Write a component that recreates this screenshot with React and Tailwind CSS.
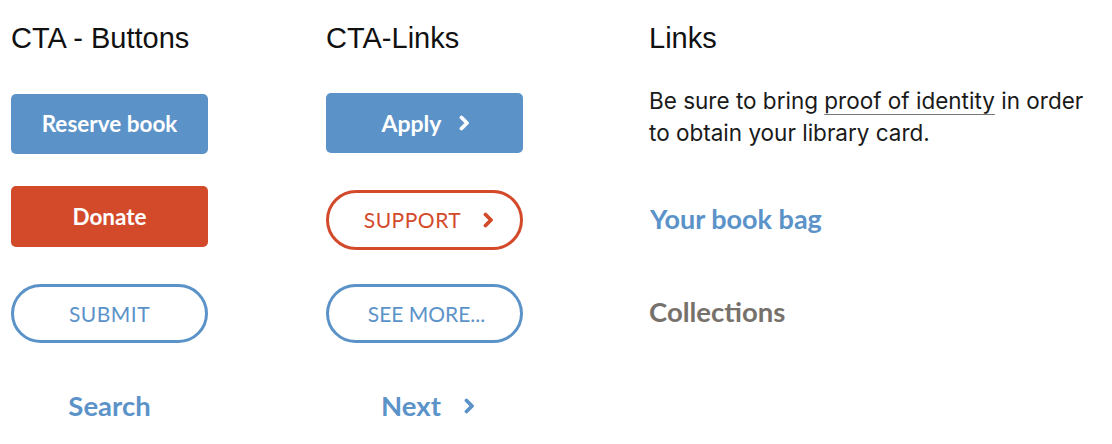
import React from 'react';

const head = "text-[29px] leading-[40px] text-[#111] font-['Liberation_Sans',Arial,sans-serif]";
const btnFont = "font-['Lato','Open_Sans',sans-serif]";

function Chevron({ className = '' }) {
  return (
    <svg className={className} width="13" height="16" viewBox="0 0 13 16" fill="none" stroke="currentColor" strokeWidth="3.8" strokeLinecap="round" strokeLinejoin="round">
      <path d="M3.5 2.5l5.5 5.5-5.5 5.5" />
    </svg>
  );
}

export default function App() {
  return (
    <div className="w-[1112px] h-[444px] bg-white overflow-hidden">
      <div className="grid grid-cols-[315px_323px_1fr] pl-[11px] pt-[18px]">
        {/* CTA - Buttons */}
        <div className="flex flex-col">
          <h2 className={head}>CTA - Buttons</h2>
          <button className={`${btnFont} mt-[36px] w-[197px] h-[60px] rounded-[5px] bg-[#5b93c9] text-white text-[22.5px] font-bold`}>
            Reserve book
          </button>
          <button className={`${btnFont} mt-[32px] w-[197px] h-[61px] rounded-[5px] bg-[#d34a2b] text-white text-[22.5px] font-bold`}>
            Donate
          </button>
          <button className={`${btnFont} mt-[37px] w-[197px] h-[59px] rounded-full border-[3px] border-[#5b93c9] text-[#5b93c9] text-[21px] tracking-[0.5px]`}>
            SUBMIT
          </button>
          <a className={`${btnFont} mt-[43px] w-[197px] h-[40px] flex items-center justify-center text-[#5b93c9] text-[27.5px] font-bold`}>
            Search
          </a>
        </div>

        {/* CTA-Links */}
        <div className="flex flex-col">
          <h2 className={head}>CTA-Links</h2>
          <button className={`${btnFont} mt-[35px] w-[197px] h-[60px] rounded-[5px] bg-[#5b93c9] text-white text-[23px] font-bold flex items-center justify-center gap-[17px] pl-[4px]`}>
            Apply <Chevron />
          </button>
          <button className={`${btnFont} mt-[37px] w-[197px] h-[60px] rounded-full border-[3px] border-[#d34a2b] text-[#d34a2b] text-[21px] tracking-[0.5px] flex items-center justify-center gap-[21px] pl-[10px]`}>
            SUPPORT <Chevron />
          </button>
          <button className={`${btnFont} mt-[34px] w-[197px] h-[59px] rounded-full border-[3px] border-[#5b93c9] text-[#5b93c9] text-[21px] tracking-[0px] pl-[4px]`}>
            SEE MORE...
          </button>
          <a className={`${btnFont} mt-[43px] w-[197px] h-[40px] flex items-center justify-center gap-[22px] pl-[8px] text-[#5b93c9] text-[27.5px] font-bold`}>
            Next <Chevron />
          </a>
        </div>

        {/* Links */}
        <div className="flex flex-col">
          <h2 className={head}>Links</h2>
          <p className="mt-[27px] text-[22.5px] leading-[32px] text-[#1a1a1a] font-['Inter','Liberation_Sans',sans-serif] w-[455px]">
            Be sure to bring{' '}
            <span className="underline decoration-[#777] decoration-1 underline-offset-[5px]">proof of identity</span>{' '}
            in order to obtain your library card.
          </p>
          <a className={`${btnFont} mt-[50px] ml-[1px] text-[27px] leading-[40px] font-bold text-[#5b93c9]`}>Your book bag</a>
          <a className={`${btnFont} mt-[53px] text-[27.5px] leading-[40px] font-bold text-[#77716c]`}>Collections</a>
        </div>
      </div>
    </div>
  );
}
